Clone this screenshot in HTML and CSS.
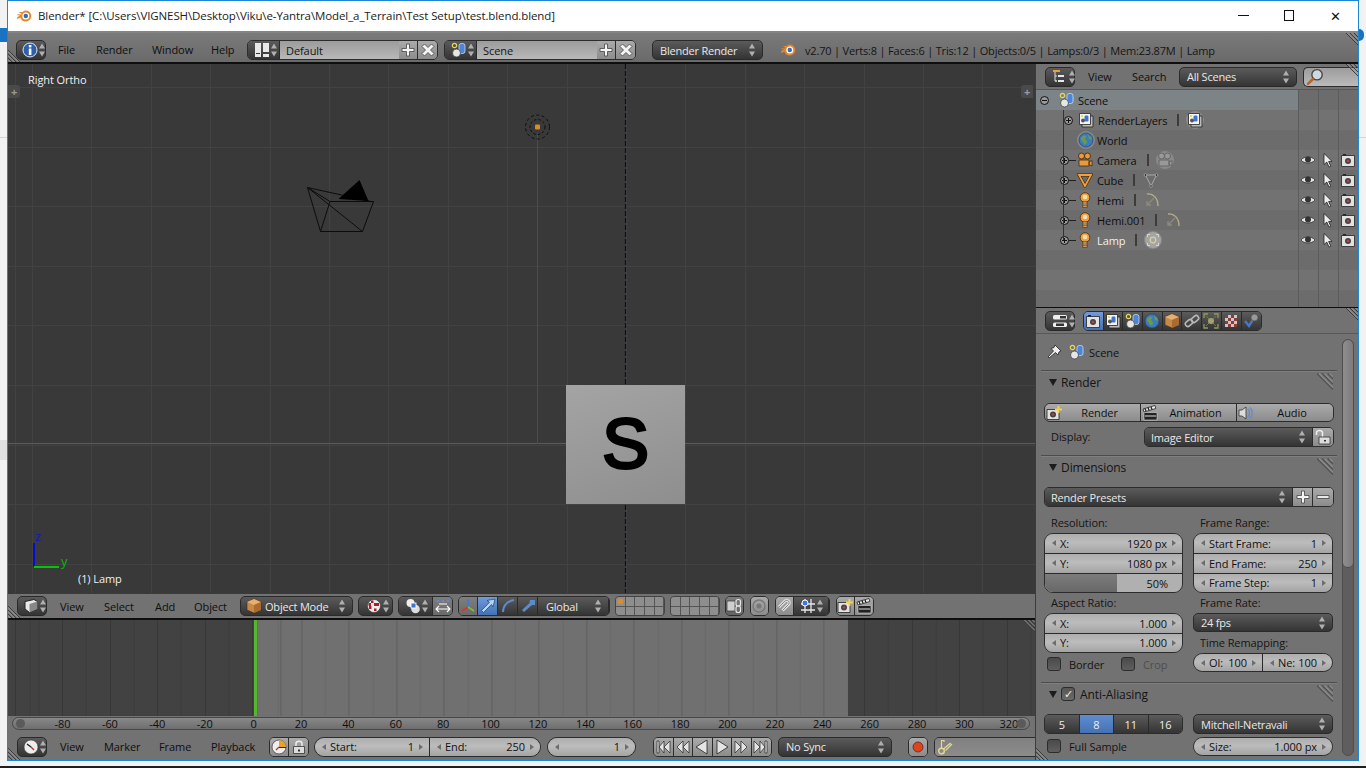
FILE: index.html
```html
<!DOCTYPE html>
<html lang="en">
<head>
<meta charset="utf-8">
<title>Blender</title>
<link rel="stylesheet" href="styles.css">
</head>
<body>
<svg class="defs" aria-hidden="true">
  <symbol id="ud" viewBox="0 0 8 16"><path d="M4 1.500 7 6.500H1zM4 14.500 1 9.500H7z" fill="currentColor"/></symbol>
  <symbol id="info" viewBox="0 0 16 16"><circle cx="8" cy="8" r="7" fill="#2f5fa8" stroke="#dfe8f5"/><rect x="6.800" y="3" width="2.600" height="2.400" fill="#fff"/><rect x="6.800" y="6.500" width="2.600" height="6.500" fill="#fff"/></symbol>
  <symbol id="layout" viewBox="0 0 16 16"><path d="M1 1h6v14H1zM9 1h6v9H9zM9 12h6v3H9z" fill="#e8e8e8"/><path d="M2 11h4v1H2z" fill="#333"/></symbol>
  <symbol id="scene" viewBox="0 0 16 16"><circle cx="3.500" cy="3.500" r="2.200" fill="none" stroke="#e6d860" stroke-width="1.200"/><rect x="8" y="1.500" width="6" height="10" rx="2.200" fill="#4d86d8" stroke="#dce8f8" stroke-width=".7"/><circle cx="5.500" cy="11" r="4" fill="#e6e6e6" stroke="#333" stroke-width=".7"/></symbol>
  <symbol id="plus" viewBox="0 0 16 16"><path d="M6.500 2h3v4.500H14v3H9.500V14h-3V9.500H2v-3h4.500z" fill="#f4f4f4" stroke="#444" stroke-width=".8"/></symbol>
  <symbol id="minus" viewBox="0 0 16 16"><path d="M2 6.500h12v3H2z" fill="#e8e8e8" stroke="#444" stroke-width=".8"/></symbol>
  <symbol id="close" viewBox="0 0 16 16"><path d="m4.500 2 3.500 3.500L11.500 2 14 4.500 10.500 8l3.500 3.500-2.500 2.500L8 10.500 4.500 14 2 11.500 5.500 8 2 4.500z" fill="#f4f4f4" stroke="#444" stroke-width=".8"/></symbol>
  <symbol id="logo" viewBox="0 0 16 16"><path d="M1 6.500 6 6.300 2.800 4h3.500L9 2.600c3-.3 5.700 1.500 6.200 4.500.5 3.300-2 6.300-5.300 6.400-2.600.1-5-1.500-5.400-4L2 10.800C1 10.800.6 9.800 1.500 9L4 7.500 1.200 7.300Z" fill="#e8862a"/><circle cx="9.800" cy="8" r="3.500" fill="#fff"/><circle cx="9.800" cy="8" r="2.200" fill="#2d6cc0"/></symbol>
  <symbol id="outl" viewBox="0 0 16 16"><path d="M1 1h7v2H1z" fill="#f0a030"/><path d="M3 3v9h2M3 7h2M3 12h2" stroke="#ddd" fill="none"/><path d="M6 6h6v2H6zM6 11h6v2H6z" fill="#e8e8e8"/></symbol>
  <symbol id="mag" viewBox="0 0 16 16"><circle cx="9.800" cy="6" r="4.600" fill="#cfd8dc" stroke="#444" stroke-width="1.200"/><path d="M6 10 1.800 14.200" stroke="#b5652a" stroke-width="2.200" stroke-linecap="round"/></symbol>
  <symbol id="rl" viewBox="0 0 16 16"><path d="M4 4h11v11H4z" fill="#bbb" stroke="#222" stroke-width=".8"/><path d="M1.500 1.500h11v11h-11z" fill="#f4f4f4" stroke="#222" stroke-width=".8"/><rect x="6.500" y="3.500" width="4" height="6" rx="1.200" fill="#3f75c8"/><circle cx="5" cy="8.500" r="2" fill="#555"/><circle cx="4" cy="4" r="1.100" fill="#e6d040"/></symbol>
  <symbol id="world" viewBox="0 0 16 16"><circle cx="8" cy="8" r="7" fill="#3c7bc0" stroke="#26486e" stroke-width=".8"/><path d="M3 6c2-3 4-3 5-2s-1 2-1 3 2 1 2 3-2 3-3 2-1-3-3-4zM10 3l3 2 1 3-3-1z" fill="#6c9a4a"/></symbol>
  <symbol id="cam" viewBox="0 0 16 16"><circle cx="4.500" cy="4" r="3" fill="#e89a3c" stroke="#4a2a0a" stroke-width=".9"/><circle cx="10.500" cy="4" r="3" fill="#e89a3c" stroke="#4a2a0a" stroke-width=".9"/><path d="M2 8h10v6H2zM12 10l3-1.500V14l-3-1.500z" fill="#e89a3c" stroke="#4a2a0a" stroke-width=".8"/></symbol>
  <symbol id="camg" viewBox="0 0 16 16"><circle cx="4.500" cy="4" r="3" fill="#999" stroke="#666"/><circle cx="10.500" cy="4" r="3" fill="#999" stroke="#666"/><path d="M2 8h10v6H2zM12 10l3-1.500V14l-3-1.500z" fill="#999" stroke="#666"/></symbol>
  <symbol id="mesh" viewBox="0 0 16 16"><path d="M2 3h12L8 14Z" fill="none" stroke="#3a2208" stroke-width="3"/><path d="M2 3h12L8 14Z" fill="none" stroke="#f0a040" stroke-width="1.800"/></symbol>
  <symbol id="meshd" viewBox="0 0 16 16"><path d="M2.500 3h11L8 14Z" fill="none" stroke="#a8a8a8"/><g fill="#222" stroke="#bbb" stroke-width=".7"><circle cx="2.500" cy="3" r="1.300"/><circle cx="13.500" cy="3" r="1.300"/><circle cx="8" cy="14" r="1.300"/></g></symbol>
  <symbol id="bulb" viewBox="0 0 16 16"><circle cx="8" cy="5.500" r="4.800" fill="#f0a040" stroke="#4a2a0a" stroke-width=".8"/><circle cx="8" cy="5" r="2.300" fill="#fbe0b0"/><path d="M5.800 10h4.400v5.500H5.800z" fill="#eec080" stroke="#3a2208" stroke-width=".6"/><path d="M5.800 12h4.400M5.800 13.800h4.400" stroke="#3a2208" stroke-width=".7"/></symbol>
  <symbol id="hemi" viewBox="0 0 16 16"><path d="M3 2c6-1 11 4 11 12" fill="none" stroke="#b5ad82" stroke-width="1.400"/><path d="M10 6 3 13M3 9v4h4" fill="none" stroke="#8c8c78" stroke-width="1.400"/></symbol>
  <symbol id="point" viewBox="0 0 16 16"><circle cx="8" cy="8" r="8" fill="#a4a4a4"/><circle cx="8" cy="8" r="2.800" fill="none" stroke="#d8d0a0" stroke-width="1.200"/><path d="M2.500 5V2.500H5M11 2.500h2.500V5M13.500 11v2.500H11M5 13.500H2.500V11" fill="none" stroke="#d8d8c8"/></symbol>
  <symbol id="eye" viewBox="0 0 16 16"><path d="M1 8c3-4 11-4 14 0-3 4-11 4-14 0Z" fill="#e8e8e8" stroke="#333" stroke-width=".8"/><circle cx="8" cy="7.500" r="3" fill="#333"/></symbol>
  <symbol id="cur" viewBox="0 0 16 16"><path d="M4 1.500v11l2.800-2.400 2.200 5 1.800-.8-2.200-4.800 3.400-.2Z" fill="#eee" stroke="#222" stroke-width=".8"/></symbol>
  <symbol id="rend" viewBox="0 0 16 16"><path d="M1.500 3.500h13v11h-13z" fill="#e2e2e2" stroke="#222" stroke-width=".8"/><path d="M3 2h3v1.500H3z" fill="#222"/><circle cx="8" cy="9" r="3" fill="#444"/><circle cx="8" cy="9" r="1.300" fill="#c04040"/></symbol>
  <symbol id="rendp" viewBox="0 0 16 16"><path d="M1 4.500h12v10H1z" fill="#e2e2e2" stroke="#222" stroke-width=".8"/><circle cx="7" cy="9.500" r="3" fill="#444"/><circle cx="7" cy="9.500" r="1.300" fill="#c04040"/><path d="M11.500 1h2v2.500H16v2h-2.500V8h-2V5.500H9v-2h2.500z" fill="#f2d050"/></symbol>
  <symbol id="props" viewBox="0 0 16 16"><rect x="1" y="2" width="14" height="4.500" rx="1.500" fill="#eee"/><rect x="8" y="3" width="6" height="2.500" fill="#333"/><rect x="1" y="9.500" width="14" height="4.500" rx="1.500" fill="#eee"/><rect x="4" y="10.500" width="8" height="2.500" fill="#333"/></symbol>
  <symbol id="obox" viewBox="0 0 16 16"><path d="M8 1 15 4v8l-7 3-7-3V4Z" fill="#c58a4a" stroke="#4a2a0a" stroke-width=".6"/><path d="M8 7 15 4 8 1 1 4Z" fill="#e8b070"/><path d="M8 7v8l7-3V4Z" fill="#a86c30"/></symbol>
  <symbol id="link" viewBox="0 0 16 16"><g fill="none" stroke="#b8b8b8" stroke-width="1.600"><rect x="1" y="7.500" width="8" height="5" rx="2.500" transform="rotate(-40 5 10)"/><rect x="7" y="3.500" width="8" height="5" rx="2.500" transform="rotate(-40 11 6)"/></g></symbol>
  <symbol id="cons" viewBox="0 0 16 16"><path d="M1 5V1h4M11 1h4v4M15 11v4h-4M5 15H1v-4" fill="none" stroke="#8f9a58" stroke-width="1.300"/><path d="m3 3 10 10M13 3 3 13" stroke="#6f7a48"/><circle cx="8" cy="8" r="3" fill="#a4a070"/></symbol>
  <symbol id="check" viewBox="0 0 16 16"><path fill="#c8c8c8" d="M2 2h12v12H2z"/><path fill="#8c3a3a" d="M2 2h3v3H2zM8 2h3v3H8zM5 5h3v3H5zM11 5h3v3h-3zM2 8h3v3H2zM8 8h3v3H8zM5 11h3v3H5zM11 11h3v3h-3z"/></symbol>
  <symbol id="tick" viewBox="0 0 16 16"><path d="m2 8 4 5 5-8" fill="none" stroke="#4a78c0" stroke-width="2.400"/><circle cx="11.500" cy="4.500" r="3.500" fill="#999" stroke="#444" stroke-width=".6"/></symbol>
  <symbol id="pin" viewBox="0 0 16 16"><path d="m9 1 6 6-2 1-1 3-2.500-2.500L3 14l-1-1 5.500-6L5 4.500l3-1Z" fill="#eee" stroke="#222" stroke-width=".8"/></symbol>
  <symbol id="clap" viewBox="0 0 16 16"><path d="M2 7.500h13v7.500H2z" fill="#222" stroke="#ddd" stroke-width=".6"/><path d="M3 10.500h11v1H3z" fill="#ddd"/><path d="m1 4 12-3.500.8 3L2 7Z" fill="#eee" stroke="#222" stroke-width=".8"/><path d="m3 3.500 1 2.500M6 2.500l1 2.700M9 2l1 2.500" stroke="#222" stroke-width="1.300"/></symbol>
  <symbol id="aud" viewBox="0 0 16 16"><path d="M1 5h3l4-3v12l-4-3H1Z" fill="#ddd" stroke="#333" stroke-width=".8"/><path d="M10 4c2 2 2 6 0 8M12 2.500c3 3 3 8 0 11" fill="none" stroke="#5f8ad0" stroke-width="1.200"/></symbol>
  <symbol id="lock" viewBox="0 0 16 16"><path d="M5 8V4.500C5 1.500 11 1.500 11 4.500V8" fill="none" stroke="#eee" stroke-width="1.500"/><path d="M2.500 7.500h11v7h-11z" fill="#ddd" stroke="#333" stroke-width=".8"/><path d="M7 10.500h2v2H7z" fill="#333"/></symbol>
  <symbol id="unlock" viewBox="0 0 16 16"><path d="M1.500 6V3.500C2 .8 7 .8 7.500 3.500V8" fill="none" stroke="#eee" stroke-width="1.500" /><path d="M4 8h11v7H4z" fill="#ddd" stroke="#333" stroke-width=".8"/><path d="M9 11h2v1.500H9z" fill="#333"/></symbol>
  <symbol id="view3d" viewBox="0 0 16 16"><path d="M2 3.500 11 1.500l3.500 2V11l-8 3.500L2 11Z" fill="#e8e8e8" stroke="#222"/><path d="m6.500 6 8-2.500v7.500l-8 3.500Z" fill="#888"/></symbol>
  <symbol id="shade" viewBox="0 0 16 16"><circle cx="8" cy="8" r="6.500" fill="#eee" stroke="#333" stroke-width=".6"/><path fill="#a82020" d="M5 2.500h2.500V5H5zM10.500 5H13v3h-2.500zM8 5h2.500v3H8zM3 8h2.500v3H3zM8 10.500h2.500V13H8zM5 5H2.500v3H5z"/></symbol>
  <symbol id="pivot" viewBox="0 0 16 16"><circle cx="5.500" cy="5" r="4" fill="#eee"/><circle cx="10.500" cy="11" r="4.300" fill="#ddd"/><rect x="6" y="5" width="5" height="5" fill="#3d74d0" stroke="#fff" stroke-width=".9"/></symbol>
  <symbol id="pivota" viewBox="0 0 16 16"><path d="M2 3h2M7 3h2M12 3h2" stroke="#5d8ae0" stroke-width="2"/><path d="M4 6h8M1 11h14M4 8l-3 3 3 3M12 8l3 3-3 3" fill="none" stroke="#fff" stroke-width="1.100"/></symbol>
  <symbol id="axes" viewBox="0 0 16 16"><path d="M8 9V2" stroke="#3f78e0" stroke-width="1.600"/><path d="M8 9 2 13" stroke="#e03030" stroke-width="1.600"/><path d="m8 9 6 4" stroke="#7cc030" stroke-width="1.600"/><path d="M6.500 3 8 .8 9.500 3Z" fill="#3f78e0"/></symbol>
  <symbol id="tarrow" viewBox="0 0 16 16"><path d="M15 1 7 2.500l2.500 1.800L1.500 12.500l2 2L11.500 6.500 13 9Z" fill="#b5d4f5" stroke="#1d3f70" stroke-width=".7"/></symbol>
  <symbol id="trot" viewBox="0 0 16 16"><path d="M3 14C3 8 7 3 14 2" fill="none" stroke="#5d8ac8" stroke-width="2"/></symbol>
  <symbol id="tscale" viewBox="0 0 16 16"><path d="M10 2h5v5h-3L4 14 2 12 9.500 5Z" fill="#5d8ac8"/></symbol>
  <symbol id="chain" viewBox="0 0 16 16"><path d="M1 3h8v10H1z" fill="#cfcfcf" stroke="#333" stroke-width=".7"/><g fill="none" stroke="#e8e8e8" stroke-width="1.200"><rect x="10" y="1.500" width="4.500" height="6.500" rx="2"/><rect x="10" y="8" width="4.500" height="6.500" rx="2"/></g></symbol>
  <symbol id="ring" viewBox="0 0 16 16"><circle cx="8" cy="8" r="6" fill="none" stroke="#777" stroke-width="1.400"/><circle cx="8" cy="8" r="2.600" fill="#777"/></symbol>
  <symbol id="magnet" viewBox="0 0 16 16"><path d="M3 9 9 3c2.500-2 5.500 1 3.500 3.500L6.500 12.500" fill="none" stroke="#e0e0e0" stroke-width="3"/><path d="M3 9 9 3c2.500-2 5.500 1 3.500 3.500L6.500 12.500" fill="none" stroke="#888" stroke-width="1"/></symbol>
  <symbol id="snap" viewBox="0 0 16 16"><path d="M5 1v14M11 1v14M1 6h14M1 12h14" stroke="#e8e8e8" stroke-width="1.300"/><circle cx="5" cy="5" r="3" fill="#3f78e0" stroke="#fff"/></symbol>
  <symbol id="clock" viewBox="0 0 16 16"><circle cx="8" cy="8" r="7" fill="#eee" stroke="#333" stroke-width=".6"/><path d="M8 8 4 5" stroke="#222" stroke-width="1.400"/><path d="M8 8l3 3" stroke="#c83030" stroke-width="1.400"/></symbol>
  <symbol id="timer" viewBox="0 0 16 16"><circle cx="8" cy="8" r="7" fill="#eee" stroke="#333" stroke-width=".7"/><path d="M8 8V1a7 7 0 0 1 7 7Z" fill="#f0a020"/><path d="M8 8h7v1H8z" fill="#222"/><path d="m8 8-3 3" stroke="#c83030" stroke-width="1.200"/></symbol>
  <symbol id="key" viewBox="0 0 16 16"><circle cx="4.500" cy="12" r="2.800" fill="none" stroke="#e8d890" stroke-width="1.400"/><path d="M4.500 9V1.500H7v1.500M6.500 10 13 4.500l1.500 1-6 6" fill="none" stroke="#e8d890" stroke-width="1.200"/></symbol>
  <symbol id="rec" viewBox="0 0 16 16"><circle cx="8" cy="8" r="5" fill="#e0441c" stroke="#3a1208" stroke-width=".6"/></symbol>
  <symbol id="first" viewBox="0 0 16 16"><path d="M2 2h2v12H2zM9 2v12L4 8ZM15 2v12l-6-6Z" fill="#e4e4e4" stroke="#222" stroke-width=".7"/></symbol>
  <symbol id="prevk" viewBox="0 0 16 16"><path d="M8 2v12L2 8ZM14 2v12L8 8Z" fill="#e4e4e4" stroke="#222" stroke-width=".7"/></symbol>
  <symbol id="back" viewBox="0 0 16 16"><path d="M13 1v14L2 8Z" fill="#e4e4e4" stroke="#222" stroke-width=".8"/></symbol>
  <symbol id="play" viewBox="0 0 16 16"><path d="M3 1v14L14 8Z" fill="#e4e4e4" stroke="#222" stroke-width=".8"/></symbol>
  <symbol id="nextk" viewBox="0 0 16 16"><path d="M2 2v12l6-6ZM8 2v12l6-6Z" fill="#e4e4e4" stroke="#222" stroke-width=".7"/></symbol>
  <symbol id="last" viewBox="0 0 16 16"><path d="M1 2v12l6-6ZM7 2v12l5-6ZM12 2h2v12h-2z" fill="#e4e4e4" stroke="#222" stroke-width=".7"/></symbol>
  <symbol id="hatchr" viewBox="0 0 12 12"><path d="M0 0 12 12M4 0l8 8M8 0l4 4" stroke="#3c3c3c" fill="none"/><path d="M1.500 0 12 10.500M5.500 0 12 6.500M9.500 0 12 2.500" stroke="#9a9a9a" fill="none"/></symbol>
  <symbol id="hatchl" viewBox="0 0 12 12"><path d="M0 0 12 12M0 4l8 8M0 8l4 4" stroke="#3c3c3c" fill="none"/><path d="M0 1.500 10.500 12M0 5.500 6.500 12M0 9.500 2.500 12" stroke="#9a9a9a" fill="none"/></symbol>
</svg>

<div class="desk">
  <span class="bit-blue-l"></span>
  <span class="bit-blue-r"></span>
  <span class="bit-line"></span>
  <span class="bit-grey"></span>
  <div class="taskbar"></div>

  <div class="win">
    <div class="title">
      <svg class="ic tlogo"><use href="#logo"/></svg>
      <span class="ttext">Blender* [C:\Users\VIGNESH\Desktop\Viku\e-Yantra\Model_a_Terrain\Test Setup\test.blend.blend]</span>
      <div class="wbtns">
        <span class="wmin"></span>
        <span class="wmax"></span>
        <span class="wx">✕</span>
      </div>
    </div>

    <div class="hdr topbar">
      <svg class="hatch h-bl"><use href="#hatchl"/></svg>
      <svg class="hatch h-tr"><use href="#hatchr"/></svg>
      <div class="dd ed t-info"><svg class="ic"><use href="#info"/></svg><svg class="ud"><use href="#ud"/></svg></div>
      <span class="menu w38">File</span><span class="menu w56">Render</span><span class="menu w59">Window</span><span class="menu w48">Help</span>
      <div class="seg">
        <div class="dd bare w32"><svg class="ic"><use href="#layout"/></svg><svg class="ud"><use href="#ud"/></svg></div>
        <div class="field w119">Default</div>
        <div class="tool w19"><svg class="ic"><use href="#plus"/></svg></div>
        <div class="tool w19"><svg class="ic"><use href="#close"/></svg></div>
      </div>
      <div class="seg ml6">
        <div class="dd bare w32"><svg class="ic"><use href="#scene"/></svg><svg class="ud"><use href="#ud"/></svg></div>
        <div class="field w120">Scene</div>
        <div class="tool w19"><svg class="ic"><use href="#plus"/></svg></div>
        <div class="tool w19"><svg class="ic"><use href="#close"/></svg></div>
      </div>
      <div class="dd w111 ml16"><span class="dtx">Blender Render</span><svg class="ud"><use href="#ud"/></svg></div>
      <svg class="ic ml17"><use href="#logo"/></svg>
      <span class="stats">v2.70 | Verts:8 | Faces:6 | Tris:12 | Objects:0/5 | Lamps:0/3 | Mem:23.87M | Lamp</span>
    </div>

    <div class="body">
      <div class="left">
        <div class="viewport">
          <svg class="scene3d" viewBox="8 64 1027 529">
            <path d="M8 443.500H1035" stroke="#2a802a"/>
            <path d="M625.500 64V593" stroke="#0a0a34" stroke-width="1.200" stroke-dasharray="5 2"/>
            <path d="M537.500 133V444" stroke="#4c4c4c"/>
            <g fill="none" stroke="#0c0c0c">
              <path d="M307.500 187.500 330 201.500H373.500L362.500 231.500H320.500L330 201.500M307.500 187.500 320.500 231.500M307.500 187.500 362.500 231.500M307.500 187.500 373.500 202"/>
              <circle cx="537.500" cy="127" r="7.500" stroke-dasharray="2.500 2"/>
              <circle cx="537.500" cy="127" r="12" stroke-dasharray="3 2.500"/>
            </g>
            <path d="M338.500 199 359.500 180 368.500 201Z" fill="#000"/>
            <rect x="535" y="124.500" width="5" height="5" rx="1" fill="#d88a2c"/>
            <path d="M34 543V567" stroke="#0a0ad8" stroke-width="2"/>
            <path d="M34 567H59" stroke="#08c408" stroke-width="2"/>
          </svg>
          <span class="vtxt v-ortho">Right Ortho</span>
          <span class="vtxt v-lamp">(1) Lamp</span>
          <span class="axl ax-z">z</span>
          <span class="axl ax-y">y</span>
          <span class="vplus vp-l">+</span>
          <span class="vplus vp-r">+</span>
          <div class="keybox">S</div>
        </div>

        <div class="hdr vhead">
          <svg class="hatch h-bl"><use href="#hatchl"/></svg>
          <div class="dd ed"><svg class="ic"><use href="#view3d"/></svg><svg class="ud"><use href="#ud"/></svg></div>
          <span class="menu w44">View</span><span class="menu w51">Select</span><span class="menu w39">Add</span><span class="menu w59">Object</span>
          <div class="dd w113 icd"><svg class="ic"><use href="#obox"/></svg><span class="dtx grow">Object Mode</span><svg class="ud"><use href="#ud"/></svg></div>
          <div class="dd w35 ml5"><svg class="ic"><use href="#shade"/></svg><svg class="ud"><use href="#ud"/></svg></div>
          <div class="seg ml5">
            <div class="dd bare w34"><svg class="ic"><use href="#pivot"/></svg><svg class="ud"><use href="#ud"/></svg></div>
            <div class="mid w19"><svg class="ic"><use href="#pivota"/></svg></div>
          </div>
          <div class="seg ml5">
            <div class="mid w19"><svg class="ic"><use href="#axes"/></svg></div>
            <div class="tool w20 on"><svg class="ic"><use href="#tarrow"/></svg></div>
            <div class="dkt w20"><svg class="ic"><use href="#trot"/></svg></div>
            <div class="dkt w20"><svg class="ic"><use href="#tscale"/></svg></div>
            <div class="dd bare w71"><span class="dtx">Global</span><svg class="ud"><use href="#ud"/></svg></div>
          </div>
          <div class="layers"><i class="act"></i><i></i><i></i><i></i><i></i><i></i><i></i><i></i><i></i><i></i></div>
          <div class="layers ml6"><i></i><i></i><i></i><i></i><i></i><i></i><i></i><i></i><i></i><i></i></div>
          <div class="seg ml5"><div class="dkt w17 dim"><svg class="ic"><use href="#chain"/></svg></div></div>
          <div class="seg ml6"><div class="tool w17"><svg class="ic"><use href="#ring"/></svg></div></div>
          <div class="seg ml6">
            <div class="tool w18"><svg class="ic"><use href="#magnet"/></svg></div>
            <div class="dd bare w35"><svg class="ic"><use href="#snap"/></svg><svg class="ud"><use href="#ud"/></svg></div>
          </div>
          <div class="seg ml6">
            <div class="tool w18"><svg class="ic"><use href="#rendp"/></svg></div>
            <div class="tool w18"><svg class="ic"><use href="#clap"/></svg></div>
          </div>
        </div>

        <div class="timeline">
          <div class="tl-out tl-a"></div>
          <div class="tl-in"></div>
          <div class="tl-out tl-b"></div>
          <svg class="hatch h-tr"><use href="#hatchr"/></svg>
        </div>

        <div class="ruler">
          <div class="rtrack">
            <span class="rcap rcap-l"></span>
            <span class="neg">-80</span><span class="neg">-60</span><span class="neg">-40</span><span class="neg">-20</span><span>0</span><span>20</span><span>40</span><span>60</span><span>80</span><span>100</span><span>120</span><span>140</span><span>160</span><span>180</span><span>200</span><span>220</span><span>240</span><span>260</span><span>280</span><span>300</span><span class="rlast">320</span>
            <span class="rcap rcap-r"></span>
          </div>
        </div>

        <div class="hdr thead">
          <svg class="hatch h-bl"><use href="#hatchl"/></svg>
          <div class="dd ed"><svg class="ic"><use href="#clock"/></svg><svg class="ud"><use href="#ud"/></svg></div>
          <span class="menu w44">View</span><span class="menu w55">Marker</span><span class="menu w52">Frame</span><span class="menu w71">Playback</span>
          <div class="seg">
            <div class="tool w19"><svg class="ic"><use href="#timer"/></svg></div>
            <div class="tool w19"><svg class="ic"><use href="#lock"/></svg></div>
          </div>
          <div class="seg round ml5">
            <div class="num w115"><span class="k">Start:</span><span class="v">1</span></div>
            <div class="num w110"><span class="k">End:</span><span class="v">250</span></div>
          </div>
          <div class="seg round ml6">
            <div class="num w87"><span class="v">1</span></div>
          </div>
          <div class="seg ml17 transport">
            <div class="tool"><svg class="ic"><use href="#first"/></svg></div>
            <div class="tool"><svg class="ic"><use href="#prevk"/></svg></div>
            <div class="tool"><svg class="ic"><use href="#back"/></svg></div>
            <div class="tool"><svg class="ic"><use href="#play"/></svg></div>
            <div class="tool"><svg class="ic"><use href="#nextk"/></svg></div>
            <div class="tool"><svg class="ic"><use href="#last"/></svg></div>
          </div>
          <div class="dd w114 ml6"><span class="dtx">No Sync</span><svg class="ud"><use href="#ud"/></svg></div>
          <div class="seg ml16"><div class="tool w18"><svg class="ic"><use href="#rec"/></svg></div></div>
          <div class="seg ml6"><div class="tool w120 left-ic"><svg class="ic"><use href="#key"/></svg></div></div>
        </div>
      </div>

      <div class="right">
        <div class="hdr ohead">
          <div class="dd ed e-out"><svg class="ic"><use href="#outl"/></svg><svg class="ud"><use href="#ud"/></svg></div>
          <span class="menu w44">View</span><span class="menu w60">Search</span>
          <div class="dd w118"><span class="dtx">All Scenes</span><svg class="ud"><use href="#ud"/></svg></div>
          <div class="sfield ml6"><svg class="ic"><use href="#mag"/></svg></div>
          <svg class="hatch h-tr"><use href="#hatchr"/></svg>
        </div>

        <div class="outliner">
          <div class="row sel">
            <span class="tog tog-m t0"></span><svg class="ic dic i0"><use href="#scene"/></svg><span class="rname n0">Scene</span>
          </div>
          <div class="row odd">
            <span class="tog t1"></span><svg class="ic"><use href="#rl"/></svg><span class="rname">RenderLayers</span><span class="sep"></span><span class="halo"><svg class="ic"><use href="#rl"/></svg></span>
          </div>
          <div class="row">
            <span class="noTog"></span><span class="halo hl"><svg class="ic"><use href="#world"/></svg></span><span class="rname">World</span>
          </div>
          <div class="row odd">
            <span class="tog t2"></span><svg class="ic"><use href="#cam"/></svg><span class="rname">Camera</span><span class="sep"></span><span class="halo"><svg class="ic"><use href="#camg"/></svg></span>
            <div class="restrict"><svg class="ic"><use href="#eye"/></svg><svg class="ic"><use href="#cur"/></svg><svg class="ic"><use href="#rend"/></svg></div>
          </div>
          <div class="row">
            <span class="tog t2"></span><svg class="ic"><use href="#mesh"/></svg><span class="rname">Cube</span><span class="sep"></span><span class="halo none"><svg class="ic"><use href="#meshd"/></svg></span>
            <div class="restrict"><svg class="ic"><use href="#eye"/></svg><svg class="ic"><use href="#cur"/></svg><svg class="ic"><use href="#rend"/></svg></div>
          </div>
          <div class="row odd">
            <span class="tog t2"></span><svg class="ic"><use href="#bulb"/></svg><span class="rname">Hemi</span><span class="sep"></span><span class="halo none"><svg class="ic"><use href="#hemi"/></svg></span>
            <div class="restrict"><svg class="ic"><use href="#eye"/></svg><svg class="ic"><use href="#cur"/></svg><svg class="ic"><use href="#rend"/></svg></div>
          </div>
          <div class="row">
            <span class="tog t2"></span><svg class="ic"><use href="#bulb"/></svg><span class="rname">Hemi.001</span><span class="sep"></span><span class="halo none"><svg class="ic"><use href="#hemi"/></svg></span>
            <div class="restrict"><svg class="ic"><use href="#eye"/></svg><svg class="ic"><use href="#cur"/></svg><svg class="ic"><use href="#rend"/></svg></div>
          </div>
          <div class="row odd">
            <span class="tog t2"></span><svg class="ic"><use href="#bulb"/></svg><span class="rname active">Lamp</span><span class="sep"></span><span class="halo"><svg class="ic"><use href="#point"/></svg></span>
            <div class="restrict"><svg class="ic"><use href="#eye"/></svg><svg class="ic"><use href="#cur"/></svg><svg class="ic"><use href="#rend"/></svg></div>
          </div>
          <div class="row"></div>
          <div class="row odd"></div>
          <div class="row"></div>
          <span class="vline"></span>
          <span class="col c1"></span><span class="col c2"></span><span class="col c3"></span>
        </div>

        <div class="hdr phead">
          <svg class="hatch h-tr"><use href="#hatchr"/></svg>
          <div class="dd ed e-prop"><svg class="ic"><use href="#props"/></svg><svg class="ud"><use href="#ud"/></svg></div>
          <div class="seg ml8 tabs">
            <div class="tool on"><svg class="ic"><use href="#rend"/></svg></div>
            <div class="dkt"><svg class="ic"><use href="#rl"/></svg></div>
            <div class="dkt"><svg class="ic"><use href="#scene"/></svg></div>
            <div class="dkt"><svg class="ic"><use href="#world"/></svg></div>
            <div class="dkt"><svg class="ic"><use href="#obox"/></svg></div>
            <div class="dkt"><svg class="ic"><use href="#link"/></svg></div>
            <div class="dkt"><svg class="ic"><use href="#cons"/></svg></div>
            <div class="dkt"><svg class="ic"><use href="#check"/></svg></div>
            <div class="dkt"><svg class="ic"><use href="#tick"/></svg></div>
          </div>
        </div>

        <div class="props">
          <div class="ctx"><svg class="ic"><use href="#pin"/></svg><svg class="ic ml7"><use href="#scene"/></svg><span class="ctxt">Scene</span></div>

          <section class="panel">
            <div class="phd"><i class="tri"></i><span>Render</span><svg class="hatch p-h"><use href="#hatchr"/></svg></div>
            <div class="seg round3">
              <div class="tool f96 lic"><svg class="ic"><use href="#rendp"/></svg><span>Render</span></div>
              <div class="tool f96 lic"><svg class="ic"><use href="#clap"/></svg><span>Animation</span></div>
              <div class="tool f97 lic"><svg class="ic"><use href="#aud"/></svg><span>Audio</span></div>
            </div>
            <div class="disp">
              <span class="lbl lb-d">Display:</span>
              <div class="seg grow">
                <div class="dd bare grow"><span class="dtx">Image Editor</span><svg class="ud"><use href="#ud"/></svg></div>
                <div class="tool w20"><svg class="ic"><use href="#unlock"/></svg></div>
              </div>
            </div>
          </section>

          <section class="panel p2">
            <div class="phd"><i class="tri"></i><span>Dimensions</span><svg class="hatch p-h"><use href="#hatchr"/></svg></div>
            <div class="seg">
              <div class="dd bare grow"><span class="dtx">Render Presets</span><svg class="ud"><use href="#ud"/></svg></div>
              <div class="tool w20"><svg class="ic"><use href="#plus"/></svg></div>
              <div class="tool w20"><svg class="ic"><use href="#minus"/></svg></div>
            </div>
            <div class="cols">
              <div class="col-l">
                <span class="lbl">Resolution:</span>
                <div class="stack">
                  <div class="num"><span class="k">X:</span><span class="v">1920 px</span></div>
                  <div class="num"><span class="k">Y:</span><span class="v">1080 px</span></div>
                  <div class="slider"><span class="fill"></span><span class="v">50%</span></div>
                </div>
                <span class="lbl mt3l">Aspect Ratio:</span>
                <div class="stack">
                  <div class="num"><span class="k">X:</span><span class="v">1.000</span></div>
                  <div class="num"><span class="k">Y:</span><span class="v">1.000</span></div>
                </div>
                <div class="checks mt3c">
                  <span class="cb"></span><span class="cbl w52t">Border</span>
                  <span class="cb"></span><span class="cbl off">Crop</span>
                </div>
              </div>
              <div class="col-r">
                <span class="lbl">Frame Range:</span>
                <div class="stack">
                  <div class="num"><span class="k">Start Frame:</span><span class="v">1</span></div>
                  <div class="num"><span class="k">End Frame:</span><span class="v">250</span></div>
                  <div class="num"><span class="k">Frame Step:</span><span class="v">1</span></div>
                </div>
                <span class="lbl mt3l">Frame Rate:</span>
                <div class="dd full h19d"><span class="dtx">24 fps</span><svg class="ud"><use href="#ud"/></svg></div>
                <span class="lbl mt4l">Time Remapping:</span>
                <div class="seg round h19">
                  <div class="num half"><span class="k">Ol:</span><span class="v">100</span></div>
                  <div class="num half"><span class="k">Ne:</span><span class="v">100</span></div>
                </div>
              </div>
            </div>
          </section>

          <section class="panel p3">
            <div class="phd"><i class="tri"></i><span class="cb cb-on">✓</span><span>Anti-Aliasing</span><svg class="hatch p-h"><use href="#hatchr"/></svg></div>
            <div class="cols">
              <div class="col-l">
                <div class="seg">
                  <div class="dkt grow aa">5</div><div class="dkt grow aa aaon">8</div><div class="dkt grow aa">11</div><div class="dkt grow aa">16</div>
                </div>
                <div class="checks mtfs"><span class="cb"></span><span class="cbl">Full Sample</span></div>
              </div>
              <div class="col-r">
                <div class="dd full"><span class="dtx">Mitchell-Netravali</span><svg class="ud"><use href="#ud"/></svg></div>
                <div class="seg round mt3 h19"><div class="num grow"><span class="k">Size:</span><span class="v">1.000 px</span></div></div>
              </div>
            </div>
          </section>

          <div class="sbar"><span class="sthumb"></span></div>
          <svg class="hatch h-bl"><use href="#hatchl"/></svg>
        </div>
      </div>
    </div>
  </div>
</div>
</body>
</html>
```

FILE: styles.css
```css
* { box-sizing: border-box; }
html, body { margin: 0; padding: 0; width: 1366px; height: 768px; overflow: hidden; }
body { font-family: "Open Sans", "Noto Sans", sans-serif; font-size: 11px; letter-spacing: -.08px; color: #111; background: #f2f2f2; }
.defs { position: absolute; width: 0; height: 0; }
i { font-style: normal; }

.desk { position: relative; width: 1366px; height: 768px; }
.bit-blue-l { position: absolute; left: 0; top: 28px; width: 8px; height: 14px; background: #1a73c2; }
.bit-blue-r { position: absolute; left: 1359px; top: 29px; width: 5px; height: 12px; background: #1a73c2; border-radius: 0 6px 6px 0; }
.bit-line { position: absolute; left: 0; top: 137px; width: 1366px; height: 1px; background: #d4d4d4; }
.bit-grey { position: absolute; left: 0; top: 440px; width: 8px; height: 20px; background: #e0e0e0; }
.taskbar { position: absolute; left: 0; top: 766px; width: 1366px; height: 2px; background: #1e1e1e; }

.win { position: absolute; left: 7px; top: 0; width: 1352px; height: 761px; border: 1px solid #1c86d8; display: flex; flex-direction: column; background: #727272; }

.title { height: 30px; flex: none; background: #fff; display: flex; align-items: center; padding-left: 8px; padding-bottom: 1px; color: #1a1a1a; font-size: 12px; }
.tlogo { margin-right: 6px; }
.ttext { font-family: "Open Sans", sans-serif; font-size: 11.5px; letter-spacing: -.1px; white-space: nowrap; }
.wbtns { margin-left: auto; display: flex; align-items: center; height: 30px; }
.wmin { width: 11px; height: 1px; background: #111; margin-right: 35px; }
.wmax { width: 10px; height: 11px; border: 1px solid #111; margin-right: 35px; }
.wx { width: 12px; font-size: 13px; line-height: 14px; margin-right: 17px; color: #111; text-align: center; }

.ic { width: 16px; height: 16px; flex: none; display: block; }
.ud { width: 8px; height: 16px; flex: none; color: #b0b0b0; display: block; }

.hdr { display: flex; align-items: center; background: linear-gradient(#7a7a7a, #6a6a6a); position: relative; white-space: nowrap; flex: none; }
.topbar { height: 33px; padding-left: 8px; padding-top: 5px; border-bottom: 2px solid #0e0e0e; border-top: 2px solid #858585; }
.vhead { height: 27px; padding-left: 9px; border-top: 1px solid #3a3a3a; border-bottom: 2px solid #0e0e0e; background: #727272; }
.thead { height: 29px; padding-left: 9px; padding-top: 2px; background: #727272; }
.ohead { height: 26px; padding-left: 9px; border-bottom: 1px solid #575757; background: #727272; }
.phead { height: 26px; padding-left: 9px; border-bottom: 1px solid #575757; background: #727272; }

.menu { display: block; padding-left: 12px; color: #0e0e0e; line-height: 20px; flex: none; }
.ohead .menu, .vhead .menu, .thead .menu { padding-left: 13px; }
.vhead .menu, .thead .menu { padding-top: 1px; }

.dd { height: 20px; display: flex; align-items: center; justify-content: space-between; padding: 0 6px 0 7px; border: 1px solid #2a2a2a; border-radius: 5px; background: linear-gradient(#5b5b5b, #343434); color: #e8e8e8; flex: none; }
.dd.bare { border: 0; border-radius: 0; height: 100%; border-right: 1px solid #2a2a2a; padding-left: 6px; }
.dd.ed { width: 30px; padding: 0 3px 0 5px; }
.dd.ed.e-out, .dd.ed.e-prop { padding-left: 6px; }
.dd.icd { padding-left: 5px; }
.dtx { display: block; padding-right: 4px; letter-spacing: -.2px; }
.grow { flex: 1 1 0; min-width: 0; }
.dd .dtx.grow { padding-left: 3px; }
.full { width: 100%; height: 20px; }
.full.h19d { height: 19px; }

.seg { display: flex; height: 20px; border: 1px solid #2c2c2c; border-radius: 5px; overflow: hidden; flex: none; }
.seg.grow { flex: 1 1 0; }
.seg.round { border-radius: 10px; }
.seg.round3 { border-radius: 6px; height: 19px; }
.seg.h19 { height: 19px; }
.field { background: linear-gradient(#9c9c9c, #b8b8b8); color: #141414; display: flex; align-items: center; padding-left: 6px; height: 100%; }
.tool { height: 100%; display: flex; align-items: center; justify-content: center; background: linear-gradient(#aaa, #8c8c8c); border-right: 1px solid #2c2c2c; color: #111; flex: none; }
.tool:last-child, .dkt:last-child, .num:last-child, .mid:last-child { border-right: 0; }
.tool.on { background: linear-gradient(#6f9bdb, #4471b4); }
.mid { height: 100%; display: flex; align-items: center; justify-content: center; background: linear-gradient(#7e7e7e, #6a6a6a); border-right: 1px solid #2c2c2c; flex: none; }
.dkt { height: 100%; display: flex; align-items: center; justify-content: center; background: linear-gradient(#5b5b5b, #343434); border-right: 1px solid #2a2a2a; flex: none; color: #eee; }
.dkt.dim { background: linear-gradient(#7d7d7d, #636363); }
.dkt.grow { flex: 1 1 0; }
.left-ic { justify-content: flex-start; padding-left: 2px; background: linear-gradient(#808080, #8c8c8c); }
.transport .tool { width: 19.500px; }
.tabs .tool, .tabs .dkt { width: 19.700px; }

.w17 { width: 17px; } .w18 { width: 18px; } .w19 { width: 19px; } .w20 { width: 20px; } .w32 { width: 32px; } .w34 { width: 34px; } .w35 { width: 35px; } .w38 { width: 38px; } .w39 { width: 39px; }
.w44 { width: 44px; } .w48 { width: 48px; } .w51 { width: 51px; } .w52 { width: 52px; } .w55 { width: 55px; } .w56 { width: 56px; } .w59 { width: 59px; } .w60 { width: 60px; }
.w71 { width: 71px; } .w87 { width: 87px; } .w110 { width: 110px; } .w111 { width: 111px; } .w113 { width: 113px; } .w114 { width: 114px; } .w115 { width: 115px; } .w118 { width: 118px; }
.w119 { width: 119px; } .w120 { width: 120px; }
.ml5 { margin-left: 5px; } .ml6 { margin-left: 6px; } .ml7 { margin-left: 7px; } .ml8 { margin-left: 8px; } .ml16 { margin-left: 16px; } .ml17 { margin-left: 17px; }
.seg .dd.w71 { padding-left: 8px; }

.stats { margin-left: 9px; color: #141414; letter-spacing: -.18px; }

.hatch { position: absolute; width: 12px; height: 12px; }
.h-bl { left: 0; bottom: 0; }
.h-tr { right: 0; top: 0; }

.body { flex: 1 1 0; display: flex; min-height: 0; }
.left { width: 1028px; flex: none; display: flex; flex-direction: column; overflow: hidden; border-right: 1px solid #3c3c3c; }
.right { width: 322px; flex: none; display: flex; flex-direction: column; overflow: hidden; }

.viewport { flex: 1 1 0; position: relative; background-color: #393939;
  background-image: repeating-linear-gradient(90deg, #424242 0 1px, transparent 1px 59.4px), repeating-linear-gradient(#424242 0 1px, transparent 1px 59.6px);
  background-position: 24px 0, 0 23px; overflow: hidden; }
.scene3d { position: absolute; left: 0; top: 0; width: 1027px; height: 529px; }
.vtxt { position: absolute; color: #f0f0f0; line-height: 14px; }
.v-ortho { left: 20px; top: 9px; }
.v-lamp { left: 70px; top: 508px; }
.axl { position: absolute; font-size: 13px; line-height: 14px; }
.ax-z { left: 27px; top: 465px; color: #1414c8; }
.ax-y { left: 53px; top: 490px; color: #12b012; }
.vplus { position: absolute; top: 21px; width: 12px; height: 13px; background: #4a4a4a; color: #9a9a9a; font-size: 11px; font-weight: 700; line-height: 13px; text-align: center; }
.vp-l { left: 0; border-radius: 0 3px 3px 0; }
.vp-r { right: 2px; border-radius: 3px 0 0 3px; }
.keybox { position: absolute; left: 558px; top: 321px; width: 119px; height: 119px; background: linear-gradient(160deg, #a4a4a4, #8e8e8e); color: #000; font-family: "Liberation Sans", sans-serif; font-weight: 400; font-size: 70px; -webkit-text-stroke: 3px #000; line-height: 119px; text-align: center; letter-spacing: 0; }

.timeline { height: 96px; flex: none; display: flex; position: relative; background: #424242; }
.tl-out { background-color: #424242; background-image: repeating-linear-gradient(90deg, #373737 0 1px, transparent 1px 47.5px), repeating-linear-gradient(90deg, #3c3c3c 0 1px, transparent 1px 47.5px); }
.tl-a { width: 246px; background-position: 7px 0, 30.750px 0; }
.tl-b { flex: 1 1 0; background-position: 16px 0, 39.700px 0; }
.tl-in { width: 594px; border-left: 3px solid #55b62d; background-color: #707070; background-image: repeating-linear-gradient(90deg, #5e5e5e 0 1px, transparent 1px 47.5px), repeating-linear-gradient(90deg, #686868 0 1px, transparent 1px 47.5px); background-position: 44.400px 0, 20.700px 0; }

.ruler { height: 15px; flex: none; background: #727272; padding: 1px 5px 1px 4px; }
.rtrack { height: 13px; border: 1px solid #484848; border-radius: 7px; background: linear-gradient(#888, #6e6e6e); display: flex; align-items: center; padding-left: 27.300px; position: relative; overflow: hidden; }
.rtrack span { width: 47.4px; flex: none; text-align: center; color: #0e0e0e; line-height: 12px; }
.rtrack .neg { padding-right: 3px; }
.rtrack .rlast { padding-right: 6px; }
.rtrack .rcap { position: absolute; width: 9px; height: 9px; border-radius: 50%; background: #5a5a5a; top: 1px; }
.rcap-l { left: 3px; }
.rcap-r { right: 3px; }

.sfield { width: 62px; height: 20px; border: 1px solid #2c2c2c; border-right: 0; border-radius: 5px 0 0 5px; background: linear-gradient(#9c9c9c, #bbb); padding: 0 0 0 2px; flex: none; }
.sfield .ic { width: 18px; height: 18px; }

.layers { display: grid; grid-template-columns: repeat(5, 1fr); grid-template-rows: 1fr 1fr; width: 49.500px; height: 20px; border: 1px solid #444; border-radius: 4px; overflow: hidden; flex: none; gap: 1px; background: #555; }
.layers i { background: #8e8e8e; display: block; }
.layers i.act { background: #8e8e8e radial-gradient(circle, #e08a30 0 2.500px, transparent 3px); }
.seg + .layers { margin-left: 5px; }
.layers + .layers { margin-left: 5.500px; }

.num { display: flex; align-items: center; height: 20px; padding: 0 6px 0 7px; background: linear-gradient(#aeaeae, #bcbcbc 45%, #a4a4a4); color: #111; border-right: 1px solid #2a2a2a; flex: none; }
.num.grow { flex: 1 1 0; }
.seg .num { height: 100%; }
.num::before { content: ""; border: 3.500px solid transparent; border-right: 4px solid #6c6c6c; border-left: 0; margin-right: 4px; }
.num::after { content: ""; border: 3.500px solid transparent; border-left: 4px solid #6c6c6c; border-right: 0; margin-left: 5px; }
.num .v { margin-left: auto; }
.half { width: 50%; }

.stack { border: 1px solid #2c2c2c; border-radius: 9px; overflow: hidden; flex: none; }
.stack .num { border-right: 0; border-bottom: 1px solid #2a2a2a; width: 100%; padding-bottom: 1px; }
.stack .num:last-child { border-bottom: 0; height: 18px; }
.slider { height: 18px; display: flex; align-items: center; justify-content: flex-end; padding-right: 14px; background: #b0b0b0; position: relative; }
.slider .fill { position: absolute; left: 0; top: 0; bottom: 0; width: 72px; background: linear-gradient(#7c7c7c, #686868); }
.slider .v { position: relative; }

.outliner { height: 218px; flex: none; position: relative; border-bottom: 1px solid #0e0e0e; overflow: hidden; background: #6e6e6e; }
.row { height: 20px; display: flex; align-items: center; background: #6c6c6c; padding-left: 27px; color: #0e0e0e; position: relative; }
.row.odd { background: #727272; }
.row.sel { padding-left: 4px; }
.row.sel::before { content: ""; position: absolute; left: 0; top: 0; bottom: 0; width: 262px; background: #7c8487; }
.row > * { position: relative; }
.tog { width: 9px; height: 9px; border-radius: 50%; border: 1px solid #111; background: #999 linear-gradient(#111, #111) center / 5px 1px no-repeat; flex: none; }
.tog::after { content: ""; position: absolute; left: 3px; top: 1px; width: 1px; height: 5px; background: #111; }
.tog-m::after { display: none; }
.tog-m.t0 { margin-right: 10px; }
.t1 { margin-left: 1px; margin-right: 5px; }
.t2 { margin-left: -3px; margin-right: 8px; }
.t2::before { content: ""; position: absolute; left: 8px; top: 3px; width: 7px; height: 1px; background: #222; }
.noTog { width: 14px; flex: none; }
.halo { width: 18px; height: 18px; border-radius: 50%; background: #8a8a8a; display: flex; align-items: center; justify-content: center; margin-left: 7px; flex: none; }
.halo.hl { margin-left: 0; margin-right: -2px; }
.halo.none { background: transparent; }
.rname { margin-left: 4px; white-space: nowrap; }
.n0 { margin-left: 3px; }
.rname.active { color: #f0f0f0; }
.sep { width: 2px; height: 12px; background: #3c3c3c; margin-left: 10px; flex: none; }
.restrict { position: absolute !important; left: 262px; top: 0; width: 60px; height: 20px; display: grid; grid-template-columns: repeat(3, 20px); justify-items: center; align-items: center; }
.vline { position: absolute; left: 27px; top: 20px; height: 130px; width: 1px; background: #333; }
.col { position: absolute; top: 0; bottom: 0; width: 1px; background: #5c5c5c; }
.c1 { left: 262px; } .c2 { left: 282px; } .c3 { left: 302px; }

.props { flex: 1 1 0; background: #727272; position: relative; padding: 0 21px 0 5px; overflow: hidden; }
.ctx { height: 36px; display: flex; align-items: center; padding-left: 5px; }
.ctxt { margin-left: 4px; }
.panel { border-top: 1px solid #4c4c4c; box-shadow: inset 0 1px 0 #808080; padding: 0 3px; height: 85px; }
.p2 { height: 227px; }
.p3 { height: 90px; }
.phd { height: 22px; display: flex; align-items: center; position: relative; margin-bottom: 10px; padding-left: 5px; font-size: 12px; color: #141414; }
.p2 .phd, .p3 .phd { margin-bottom: 9px; }
.tri { width: 0; height: 0; border: 4.500px solid transparent; border-top: 7px solid #1c1c1c; border-bottom: 0; margin-right: 4px; }
.p-h { right: 1px; top: 2px; width: 16px; height: 17px; opacity: .6; }
.f96 { width: 96px; } .f97 { flex: 1 1 0; }
.lic { justify-content: flex-start; padding-left: 1px; }
.lic span { flex: 1 1 0; text-align: center; padding-right: 3px; }
.disp { display: flex; align-items: center; margin-top: 5px; height: 20px; }
.lbl { display: block; color: #141414; line-height: 14px; padding-left: 7px; }
.lb-d { width: 100px; flex: none; }
.cols { display: grid; grid-template-columns: 139px 140px; gap: 10px; }
.p2 .cols { margin-top: 9px; }
.col-l .lbl, .col-r .lbl { margin-bottom: 3px; }
.mt3l { margin-top: 3px; }
.mt4l { margin-top: 4px; }
.checks { display: flex; align-items: center; height: 16px; padding-left: 3px; }
.mt3c { margin-top: 3px; }
.cb { width: 14px; height: 14px; border: 1px solid #2c2c2c; border-radius: 3px; background: linear-gradient(#4a4a4a, #5f5f5f); flex: none; display: block; }
.cb-on { margin: 0 5px 0 0; color: #eee; font-size: 11px; line-height: 12px; text-align: center; background: linear-gradient(#565656, #6a6a6a); }
.cbl { margin-left: 8px; color: #141414; }
.w52t { width: 44px; margin-right: 8px; }
.off { color: #4e4e4e; }
.aa { color: #eee; font-size: 11px; }
.dkt.aaon { background: linear-gradient(#5f8cd0, #4472b4); }
.mtfs { margin-top: 4px; }
.mt3 { margin-top: 3px; }
.sbar { position: absolute; left: 306px; top: 5px; width: 12px; height: 417px; border-radius: 6px; background: #5e5e5e; border: 1px solid #4e4e4e; overflow: hidden; }
.sthumb { display: block; height: 228px; border-radius: 6px; background: linear-gradient(90deg, #8e8e8e, #7c7c7c); border-bottom: 1px solid #4e4e4e; }
```
